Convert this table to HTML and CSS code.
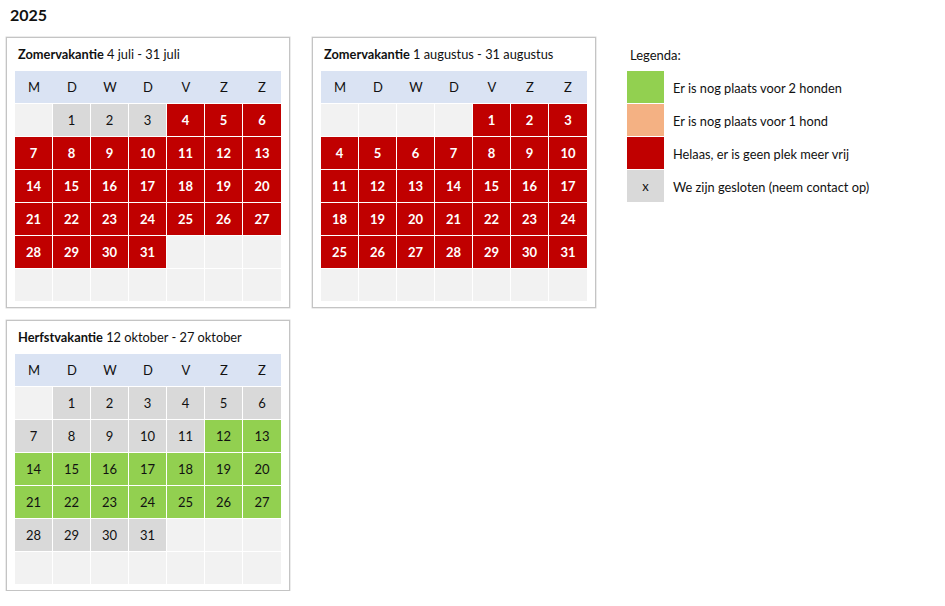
FILE: index.html
```html
<!DOCTYPE html>
<html lang="nl">
<head>
<meta charset="utf-8">
<title>2025</title>
<link rel="stylesheet" href="styles.css">
</head>
<body>
<h1 class="year">2025</h1>
<div class="layout">
  <div class="cards">
    <section class="card">
      <div class="card-title"><b>Zomervakantie</b> 4 juli - 31 juli</div>
      <div class="cal">
        <div class="hd">M</div><div class="hd">D</div><div class="hd">W</div><div class="hd">D</div><div class="hd">V</div><div class="hd">Z</div><div class="hd">Z</div>
        <div class="c e"></div><div class="c x">1</div><div class="c x">2</div><div class="c x">3</div><div class="c r">4</div><div class="c r">5</div><div class="c r">6</div>
        <div class="c r">7</div><div class="c r">8</div><div class="c r">9</div><div class="c r">10</div><div class="c r">11</div><div class="c r">12</div><div class="c r">13</div>
        <div class="c r">14</div><div class="c r">15</div><div class="c r">16</div><div class="c r">17</div><div class="c r">18</div><div class="c r">19</div><div class="c r">20</div>
        <div class="c r">21</div><div class="c r">22</div><div class="c r">23</div><div class="c r">24</div><div class="c r">25</div><div class="c r">26</div><div class="c r">27</div>
        <div class="c r">28</div><div class="c r">29</div><div class="c r">30</div><div class="c r">31</div><div class="c e"></div><div class="c e"></div><div class="c e"></div>
        <div class="c e"></div><div class="c e"></div><div class="c e"></div><div class="c e"></div><div class="c e"></div><div class="c e"></div><div class="c e"></div>
      </div>
    </section>
    <section class="card">
      <div class="card-title"><b>Zomervakantie</b> 1 augustus - 31 augustus</div>
      <div class="cal">
        <div class="hd">M</div><div class="hd">D</div><div class="hd">W</div><div class="hd">D</div><div class="hd">V</div><div class="hd">Z</div><div class="hd">Z</div>
        <div class="c e"></div><div class="c e"></div><div class="c e"></div><div class="c e"></div><div class="c r">1</div><div class="c r">2</div><div class="c r">3</div>
        <div class="c r">4</div><div class="c r">5</div><div class="c r">6</div><div class="c r">7</div><div class="c r">8</div><div class="c r">9</div><div class="c r">10</div>
        <div class="c r">11</div><div class="c r">12</div><div class="c r">13</div><div class="c r">14</div><div class="c r">15</div><div class="c r">16</div><div class="c r">17</div>
        <div class="c r">18</div><div class="c r">19</div><div class="c r">20</div><div class="c r">21</div><div class="c r">22</div><div class="c r">23</div><div class="c r">24</div>
        <div class="c r">25</div><div class="c r">26</div><div class="c r">27</div><div class="c r">28</div><div class="c r">29</div><div class="c r">30</div><div class="c r">31</div>
        <div class="c e"></div><div class="c e"></div><div class="c e"></div><div class="c e"></div><div class="c e"></div><div class="c e"></div><div class="c e"></div>
      </div>
    </section>
    <section class="card">
      <div class="card-title"><b>Herfstvakantie</b> 12 oktober - 27 oktober</div>
      <div class="cal">
        <div class="hd">M</div><div class="hd">D</div><div class="hd">W</div><div class="hd">D</div><div class="hd">V</div><div class="hd">Z</div><div class="hd">Z</div>
        <div class="c e"></div><div class="c x">1</div><div class="c x">2</div><div class="c x">3</div><div class="c x">4</div><div class="c x">5</div><div class="c x">6</div>
        <div class="c x">7</div><div class="c x">8</div><div class="c x">9</div><div class="c x">10</div><div class="c x">11</div><div class="c g">12</div><div class="c g">13</div>
        <div class="c g">14</div><div class="c g">15</div><div class="c g">16</div><div class="c g">17</div><div class="c g">18</div><div class="c g">19</div><div class="c g">20</div>
        <div class="c g">21</div><div class="c g">22</div><div class="c g">23</div><div class="c g">24</div><div class="c g">25</div><div class="c g">26</div><div class="c g">27</div>
        <div class="c x">28</div><div class="c x">29</div><div class="c x">30</div><div class="c x">31</div><div class="c e"></div><div class="c e"></div><div class="c e"></div>
        <div class="c e"></div><div class="c e"></div><div class="c e"></div><div class="c e"></div><div class="c e"></div><div class="c e"></div><div class="c e"></div>
      </div>
    </section>
  </div>
  <aside class="legend">
    <div class="legend-title">Legenda:</div>
    <div class="legend-row"><span class="sw g"></span><span class="lt">Er is nog plaats voor 2 honden</span></div>
    <div class="legend-row"><span class="sw o"></span><span class="lt">Er is nog plaats voor 1 hond</span></div>
    <div class="legend-row"><span class="sw r"></span><span class="lt">Helaas, er is geen plek meer vrij</span></div>
    <div class="legend-row"><span class="sw x">x</span><span class="lt">We zijn gesloten (neem contact op)</span></div>
  </aside>
</div>
</body>
</html>
```

FILE: styles.css
```css
html, body {
  margin: 0;
  padding: 0;
  background: #ffffff;
}
body {
  font-family: Lato, "Open Sans", "Liberation Sans", sans-serif;
  color: #111;
  font-size: 13px;
}
.year {
  margin: 0;
  padding: 5px 0 0 10px;
  font-size: 16px;
  font-weight: 700;
  line-height: 20px;
  height: 32px;
  box-sizing: border-box;
}
.layout {
  display: flex;
  align-items: flex-start;
  padding-left: 6px;
  margin-top: 5px;
}
.cards {
  display: grid;
  grid-template-columns: 284px 284px;
  column-gap: 22px;
  row-gap: 12px;
}
.card {
  border: 1px solid #c4c4c4;
  box-shadow: 0 0 0 0.5px #d8d8d8;
  padding: 0 8px 6px 8px;
  width: 284px;
  box-sizing: border-box;
}
.card-title {
  height: 33px;
  line-height: 33px;
  padding-left: 3px;
  font-size: 12.8px;
  white-space: nowrap;
}
.card-title b {
  font-weight: 700;
}
.cal {
  display: grid;
  grid-template-columns: repeat(7, 1fr);
  grid-auto-rows: 32px;
  row-gap: 1px;
  width: 266px;
}
.hd {
  background: #dae3f3;
  display: flex;
  align-items: center;
  justify-content: center;
  font-size: 13px;
  color: #111;
}
.c {
  display: flex;
  align-items: center;
  justify-content: center;
  border-right: 1px solid #fff;
  font-size: 13px;
}
.c:nth-child(7n) {
  border-right: 0;
}
.c.e { background: #f2f2f2; }
.c.x { background: #d9d9d9; color: #111; }
.c.r { background: #c00000; color: #fff; font-weight: 700; }
.c.g { background: #92d050; color: #111; }
.legend {
  margin-left: 31px;
  padding-top: 0;
}
.legend-title {
  height: 34px;
  line-height: 36px;
  padding-left: 3px;
  font-size: 13px;
}
.legend-row {
  display: flex;
  align-items: center;
  height: 33px;
}
.sw {
  width: 37px;
  height: 32px;
  margin-bottom: 1px;
  display: flex;
  align-items: center;
  justify-content: center;
  font-size: 13px;
}
.sw.g { background: #92d050; }
.sw.o { background: #f4b183; }
.sw.r { background: #c00000; }
.sw.x { background: #d9d9d9; }
.lt {
  margin-left: 9px;
  font-size: 12.8px;
  white-space: nowrap;
}
```
